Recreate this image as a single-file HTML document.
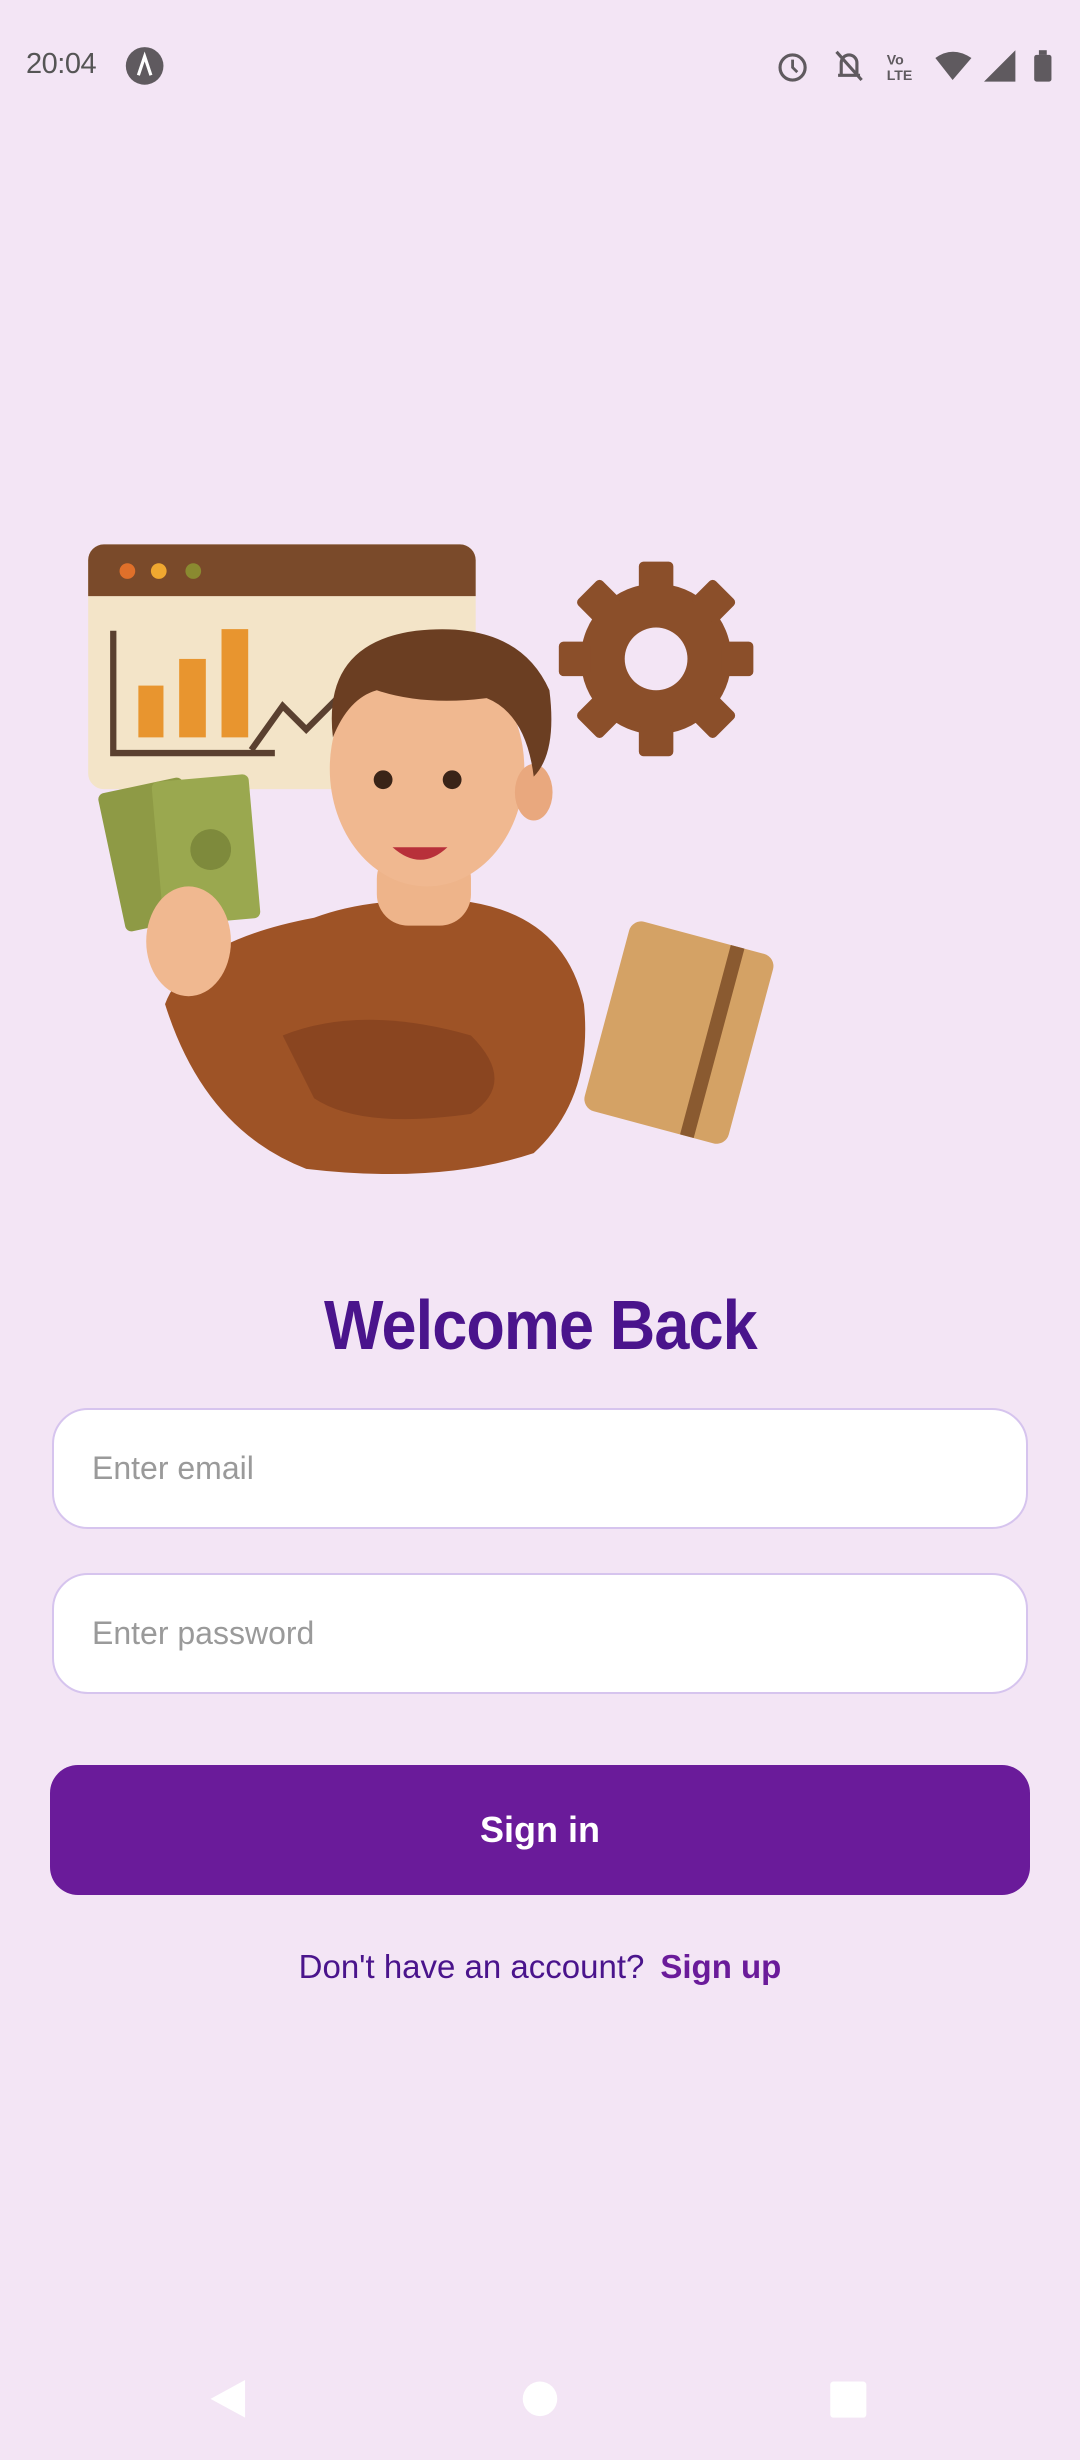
<!DOCTYPE html>
<html><head><meta charset="utf-8"><style>
html,body{margin:0;padding:0;width:1080px;height:2460px;background:#f3e5f5;overflow:hidden;font-family:"Liberation Sans",sans-serif;}
.abs{position:absolute}
.time{left:26px;top:48px;font-size:29px;color:#555;letter-spacing:-0.5px}
.title{left:0;width:1080px;top:1285px;text-align:center;font-size:70px;color:#4a148c;font-weight:600;}
.title span{display:inline-block;transform:scaleX(0.9);letter-spacing:-1px}
.inp{left:52px;width:976px;height:121px;background:#fff;border:2px solid #d6c4ee;border-radius:36px;box-sizing:border-box}
.inp span{position:absolute;left:38px;top:40px;font-size:32px;color:#9a9a9a}
.btn{left:50px;width:980px;top:1765px;height:130px;background:#6a1b9a;border-radius:28px;color:#fff;font-size:36px;font-weight:bold;text-align:center;line-height:130px}
.su{left:0;width:1080px;top:1948px;text-align:center;font-size:33px;color:#4a148c}
.su b{color:#6a1b9a;margin-left:16px}
</style></head><body>
<div class="abs time">20:04</div>
<svg class="abs" style="left:0;top:0" width="1080" height="2460" viewBox="0 0 688 1568">
 <circle cx="92" cy="42" r="12" fill="#5f5a5f"/>
 <path d="M88 48 L92 36 L96 48" stroke="#fff" stroke-width="2" fill="none"/>
 <circle cx="505" cy="43" r="8" fill="none" stroke="#5f5a5f" stroke-width="2"/>
 <path d="M505 38v5l3 3" stroke="#5f5a5f" stroke-width="1.8" fill="none"/>
 <path d="M534 48h14 M536 47v-7a5 5 0 0 1 10 0v7 M533 33l16 18" stroke="#5f5a5f" stroke-width="2" fill="none"/>
 <text x="565" y="41" font-size="9" fill="#5f5a5f" font-weight="bold">Vo</text>
 <text x="565" y="51" font-size="9" fill="#5f5a5f" font-weight="bold">LTE</text>
 <path d="M596 37 Q607 29 619 37 L607 51Z" fill="#5f5a5f"/>
 <path d="M627 52 L647 32 L647 52Z" fill="#5f5a5f"/>
 <rect x="659" y="35" width="11" height="17" rx="1.5" fill="#5f5a5f"/><rect x="662" y="32" width="5" height="3" fill="#5f5a5f"/>
 <rect x="56" y="347" width="247" height="156" rx="10" fill="#f3e4c8"/>
 <path d="M66 347h227a10 10 0 0 1 10 10v23H56v-23a10 10 0 0 1 10-10z" fill="#7a4a2a"/>
 <circle cx="81" cy="364" r="5" fill="#e0702a"/><circle cx="101" cy="364" r="5" fill="#f0a830"/><circle cx="123" cy="364" r="5" fill="#8a8a30"/>
 <path d="M72 402V480H175 M160 478l20-28 15 15 20-20" stroke="#5a4030" stroke-width="4" fill="none"/>
 <rect x="88" y="437" width="16" height="33" fill="#e8952f"/><rect x="114" y="420" width="17" height="50" fill="#e8952f"/><rect x="141" y="401" width="17" height="69" fill="#e8952f"/>
 <g transform="translate(418 420)" fill="#8b4f2a">
  <circle r="48"/>
  <g id="t"><rect x="-11" y="-62" width="22" height="20" rx="3"/></g>
  <use href="#t" transform="rotate(45)"/><use href="#t" transform="rotate(90)"/><use href="#t" transform="rotate(135)"/>
  <use href="#t" transform="rotate(180)"/><use href="#t" transform="rotate(225)"/><use href="#t" transform="rotate(270)"/><use href="#t" transform="rotate(315)"/>
  <circle r="20" fill="#f3e5f5"/>
 </g>
 <g transform="rotate(15 430 658)">
  <rect x="385" y="595" width="95" height="125" rx="8" fill="#d4a265"/>
  <rect x="450" y="595" width="9" height="125" fill="#8a5a30"/>
 </g>
 <path d="M105 640 Q120 600 200 585 Q240 570 300 575 Q360 585 372 640 Q378 700 340 735 Q280 755 195 745 Q130 720 105 640Z" fill="#9e5326"/>
 <path d="M180 660 Q230 640 300 660 Q330 690 300 710 Q230 720 200 700Z" fill="#8a4520"/>
 <rect x="240" y="540" width="60" height="50" rx="20" fill="#eeb48a"/>
 <g transform="rotate(-12 120 540)"><rect x="70" y="495" width="55" height="90" rx="4" fill="#8e9a45"/></g>
 <g transform="rotate(-5 140 540)"><rect x="100" y="495" width="62" height="92" rx="4" fill="#9aa84f"/><circle cx="134" cy="541" r="13" fill="#7e8a3c"/></g>
 <ellipse cx="120" cy="600" rx="27" ry="35" fill="#f0b890"/>
 <ellipse cx="272" cy="490" rx="62" ry="75" fill="#f0b890"/>
 <ellipse cx="340" cy="505" rx="12" ry="18" fill="#e9a87e"/>
 <path d="M212 470 Q205 410 265 402 Q330 395 350 440 Q355 480 340 495 Q335 455 310 445 Q270 450 240 440 Q222 445 212 470Z" fill="#6b3e22"/>
 <circle cx="244" cy="497" r="6" fill="#3a2418"/><circle cx="288" cy="497" r="6" fill="#3a2418"/>
 <path d="M250 540 Q268 556 285 540Z" fill="#b8303a"/>
 <path d="M156 1517 L156 1541 L134 1529Z" fill="#fff"/>
 <circle cx="344" cy="1529" r="11" fill="#fff"/>
 <rect x="529" y="1518" width="23" height="23" rx="2" fill="#fff"/>
</svg>
<div class="abs title"><span>Welcome Back</span></div>
<div class="abs inp" style="top:1408px"><span>Enter email</span></div>
<div class="abs inp" style="top:1573px"><span>Enter password</span></div>
<div class="abs btn">Sign in</div>
<div class="abs su">Don't have an account?<b>Sign up</b></div>
</body></html>
